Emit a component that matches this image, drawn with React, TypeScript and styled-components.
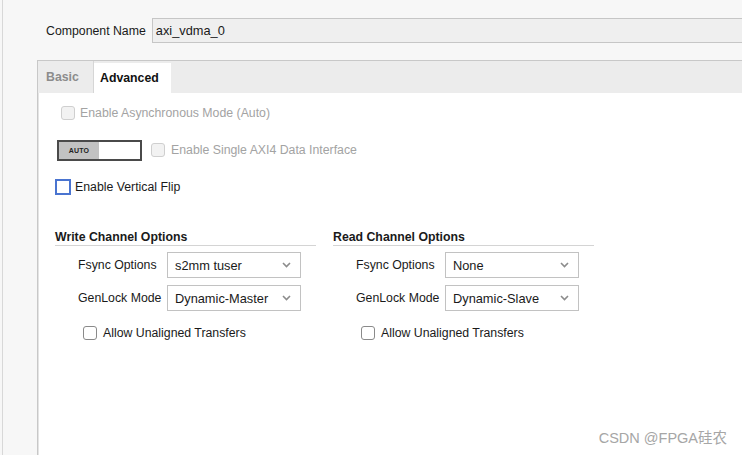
import styled, { createGlobalStyle } from "styled-components";

const GlobalStyle = createGlobalStyle`
  html, body {
    margin: 0;
    padding: 0;
    background: #f7f7f7;
    overflow: hidden;
  }
  body {
    font-family: "Liberation Sans", Arial, sans-serif;
    font-size: 12.3px;
    color: #1a1a1a;
  }
`;

const Page = styled.div`
  display: flex;
  flex-direction: column;
  height: 455px;
  margin-left: 2px;
  border-left: 1px solid #d8d8d8;
  background: #f7f7f7;
`;

const NameRow = styled.div`
  display: flex;
  align-items: center;
  gap: 6px;
  padding: 18px 0 0 43px;
  height: 25px;
`;

const NameLabel = styled.span`
  white-space: nowrap;
`;

const NameInput = styled.div`
  flex: 1;
  height: 23px;
  line-height: 23px;
  padding-left: 3px;
  background: #efefef;
  border: 1px solid #c6c6c6;
  border-right: none;
  font-size: 12.8px;
`;

const Panel = styled.div`
  flex: 1;
  display: flex;
  flex-direction: column;
  margin: 17px 0 0 34px;
  border-top: 1px solid #c8c8c8;
  border-left: 1px solid #c8c8c8;
`;

const TabBar = styled.div`
  display: flex;
  height: 32px;
  background: #ececec;
`;

const Tab = styled.div<{ $active?: boolean }>`
  display: flex;
  align-items: center;
  padding: 0 ${(p) => (p.$active ? "15px 0 6px" : "8px")};
  margin-top: ${(p) => (p.$active ? "2px" : "0")};
  width: ${(p) => (p.$active ? "56px" : "39px")};
  background: ${(p) => (p.$active ? "#ffffff" : "transparent")};
  border-right: ${(p) => (p.$active ? "none" : "1px solid #d6d6d6")};
  font-weight: bold;
  color: ${(p) => (p.$active ? "#111" : "#8c8c8c")};
`;

const Content = styled.div`
  position: relative;
  flex: 1;
  display: flex;
  flex-direction: column;
  background: #ffffff;
  border-left: 1px solid #e4e4e4;
`;

const OptionRow = styled.div<{ $top: number; $left: number; $gap?: number }>`
  display: flex;
  align-items: center;
  gap: ${(p) => p.$gap ?? 6}px;
  height: 20px;
  margin-top: ${(p) => p.$top}px;
  padding-left: ${(p) => p.$left}px;
`;

const Check = styled.span<{ $disabled?: boolean }>`
  box-sizing: border-box;
  width: 14px;
  height: 14px;
  border-radius: 3px;
  border: 1px solid ${(p) => (p.$disabled ? "#cfcfcf" : "#8a8a8a")};
  background: ${(p) => (p.$disabled ? "#f2f2f2" : "#ffffff")};
`;

const FocusCheck = styled.span`
  box-sizing: border-box;
  width: 16px;
  height: 16px;
  border: 2px solid #4a74d0;
  background: #ffffff;
`;

const OptionText = styled.span<{ $disabled?: boolean }>`
  color: ${(p) => (p.$disabled ? "#a3a3a3" : "#1a1a1a")};
  white-space: nowrap;
`;

const Toggle = styled.div`
  box-sizing: border-box;
  display: flex;
  width: 85px;
  height: 21px;
  border: 2px solid #4a4a4a;
  margin-right: 3px;
`;

const ToggleKnob = styled.div`
  width: 40px;
  display: flex;
  align-items: center;
  justify-content: center;
  background: #c2c2c2;
  font-size: 7px;
  font-weight: bold;
  letter-spacing: 0.2px;
  color: #222;
`;

const Sections = styled.div`
  display: grid;
  grid-template-columns: 261px 261px;
  column-gap: 17px;
  margin-top: 32px;
  padding-left: 16px;
`;

const Section = styled.div`
  display: flex;
  flex-direction: column;
`;

const SectionTitle = styled.div`
  height: 16px;
  line-height: 16px;
  font-weight: bold;
  border-bottom: 1px solid #d4d4d4;
  margin-bottom: 6px;
`;

const FieldRow = styled.div`
  display: flex;
  align-items: center;
  height: 26px;
  margin-bottom: 7px;
  padding-left: 23px;
`;

const FieldLabel = styled.span`
  width: 89px;
  white-space: nowrap;
`;

const Select = styled.div`
  box-sizing: border-box;
  display: flex;
  align-items: center;
  justify-content: space-between;
  width: 134px;
  height: 26px;
  padding: 0 9px 0 7px;
  border: 1px solid #c2c2c2;
  background: #ffffff;
  font-size: 12.8px;
`;

const Chevron = () => (
  <svg width="9" height="6" viewBox="0 0 9 6">
    <path d="M1 1 L4.5 4.5 L8 1" fill="none" stroke="#8c8c8c" strokeWidth="1.6" />
  </svg>
);

const SectionCheckRow = styled.div`
  display: flex;
  align-items: center;
  gap: 6px;
  margin-top: 8px;
  padding-left: 28px;
`;

const Watermark = styled.div`
  position: absolute;
  right: 15px;
  bottom: 8px;
  font-family: "Liberation Sans", "Noto Sans CJK SC", sans-serif;
  font-size: 14.5px;
  color: #a6a6a6;
`;

function ChannelSection({ title, fsync, genlock }: { title: string; fsync: string; genlock: string }) {
  return (
    <Section>
      <SectionTitle>{title}</SectionTitle>
      <FieldRow>
        <FieldLabel>Fsync Options</FieldLabel>
        <Select>
          <span>{fsync}</span>
          <Chevron />
        </Select>
      </FieldRow>
      <FieldRow>
        <FieldLabel>GenLock Mode</FieldLabel>
        <Select>
          <span>{genlock}</span>
          <Chevron />
        </Select>
      </FieldRow>
      <SectionCheckRow>
        <Check />
        <OptionText>Allow Unaligned Transfers</OptionText>
      </SectionCheckRow>
    </Section>
  );
}

export default function App() {
  return (
    <>
      <GlobalStyle />
      <Page>
        <NameRow>
          <NameLabel>Component Name</NameLabel>
          <NameInput>axi_vdma_0</NameInput>
        </NameRow>
        <Panel>
          <TabBar>
            <Tab>Basic</Tab>
            <Tab $active>Advanced</Tab>
          </TabBar>
          <Content>
            <OptionRow $top={10} $left={22} $gap={5}>
              <Check $disabled />
              <OptionText $disabled>Enable Asynchronous Mode (Auto)</OptionText>
            </OptionRow>
            <OptionRow $top={17} $left={18}>
              <Toggle>
                <ToggleKnob>AUTO</ToggleKnob>
              </Toggle>
              <Check $disabled />
              <OptionText $disabled>Enable Single AXI4 Data Interface</OptionText>
            </OptionRow>
            <OptionRow $top={17} $left={16} $gap={4}>
              <FocusCheck />
              <OptionText>Enable Vertical Flip</OptionText>
            </OptionRow>
            <Sections>
              <ChannelSection title="Write Channel Options" fsync="s2mm tuser" genlock="Dynamic-Master" />
              <ChannelSection title="Read Channel Options" fsync="None" genlock="Dynamic-Slave" />
            </Sections>
            <Watermark>CSDN @FPGA硅农</Watermark>
          </Content>
        </Panel>
      </Page>
    </>
  );
}
